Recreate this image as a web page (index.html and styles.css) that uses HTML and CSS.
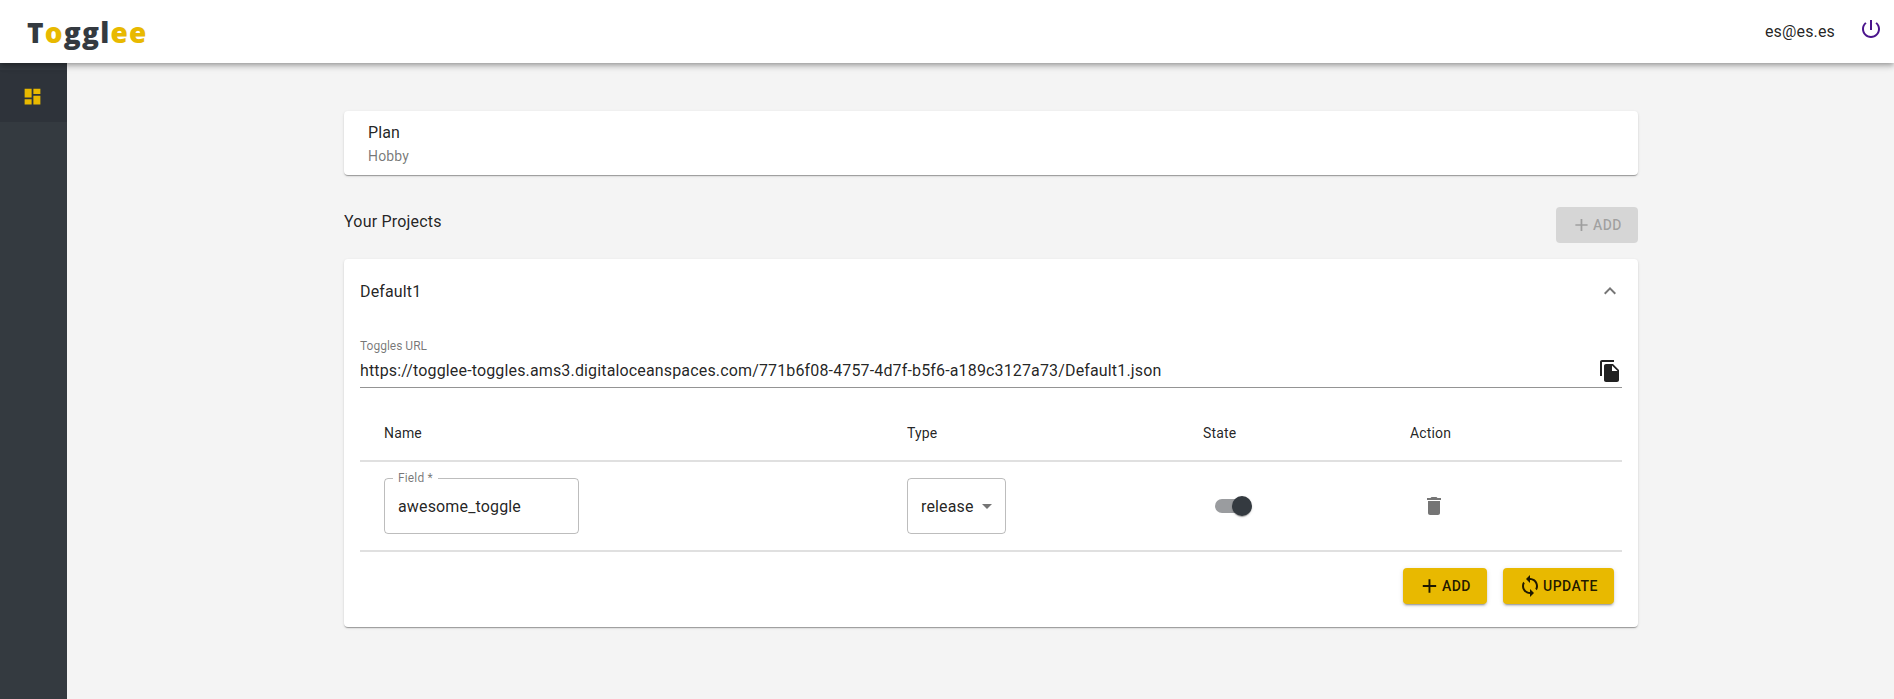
FILE: index.html
```html
<!DOCTYPE html>
<html lang="en">
<head>
<meta charset="utf-8">
<title>Togglee</title>
<link rel="stylesheet" href="styles.css">
</head>
<body>
<header class="topbar">
  <div class="logo">T<span class="gold">o</span>ggl<span class="gold">ee</span></div>
  <div class="account">
    <span class="email">es@es.es</span>
    <svg class="power" viewBox="0 0 24 24"><path d="M13 3h-2v10h2V3zm4.83 2.17l-1.42 1.42C17.99 7.86 19 9.81 19 12c0 3.87-3.13 7-7 7s-7-3.13-7-7c0-2.19 1.01-4.14 2.58-5.42L6.17 5.17C4.23 6.82 3 9.26 3 12c0 4.97 4.03 9 9 9s9-4.03 9-9c0-2.74-1.23-5.18-3.17-6.83z"/></svg>
  </div>
</header>
<div class="shell">
  <nav class="sidebar">
    <div class="nav-item">
      <svg class="nav-icon" viewBox="0 0 24 24"><path d="M3 13h8V3H3v10zm0 8h8v-6H3v6zm10 0h8V11h-8v10zm0-18v6h8V3h-8z"/></svg>
    </div>
  </nav>
  <main class="content">
    <section class="plan card">
      <div class="plan-title">Plan</div>
      <div class="plan-value">Hobby</div>
    </section>
    <div class="projects-head">
      <h2 class="projects-title">Your Projects</h2>
      <button class="btn btn-disabled" disabled>
        <svg class="btn-icon" viewBox="0 0 24 24"><path d="M19 13h-6v6h-2v-6H5v-2h6V5h2v6h6v2z"/></svg>ADD
      </button>
    </div>
    <section class="project card">
      <div class="project-head">
        <span class="project-name">Default1</span>
        <svg class="chevron" viewBox="0 0 24 24"><path d="M12 8l-6 6 1.41 1.41L12 10.83l4.59 4.58L18 14z"/></svg>
      </div>
      <div class="url-field">
        <label class="url-label">Toggles URL</label>
        <div class="url-row">
          <span class="url-value">https://togglee-toggles.ams3.digitaloceanspaces.com/771b6f08-4757-4d7f-b5f6-a189c3127a73/Default1.json</span>
          <svg class="copy" viewBox="0 0 24 24"><path d="M16 1H4c-1.1 0-2 .9-2 2v14h2V3h12V1zm-1 4l6 6v10c0 1.1-.9 2-2 2H7.99C6.89 23 6 22.1 6 21l.01-14c0-1.1.89-2 1.99-2h7zm-1 7h5.5L14 6.5V12z"/></svg>
        </div>
      </div>
      <div class="table">
        <div class="row row-head">
          <div class="cell-name">Name</div>
          <div>Type</div>
          <div>State</div>
          <div>Action</div>
        </div>
        <div class="row row-body">
          <div class="cell-name">
            <div class="outlined field">
              <span class="legend">Field *</span>
              awesome_toggle
            </div>
          </div>
          <div>
            <div class="outlined select">release<span class="caret"></span></div>
          </div>
          <div>
            <div class="switch"><span class="thumb"></span></div>
          </div>
          <div>
            <svg class="trash" viewBox="0 0 24 24"><path d="M6 19c0 1.1.9 2 2 2h8c1.1 0 2-.9 2-2V7H6v12zM19 4h-3.5l-1-1h-5l-1 1H5v2h14V4z"/></svg>
          </div>
        </div>
      </div>
      <div class="actions">
        <button class="btn btn-primary">
          <svg class="btn-icon" viewBox="0 0 24 24"><path d="M19 13h-6v6h-2v-6H5v-2h6V5h2v6h6v2z"/></svg>ADD
        </button>
        <button class="btn btn-primary">
          <svg class="btn-icon" viewBox="0 0 24 24"><path d="M12 4V1L8 5l4 4V6c3.31 0 6 2.69 6 6 0 1.01-.25 1.97-.7 2.8l1.46 1.46C19.54 15.03 20 13.57 20 12c0-4.42-3.58-8-8-8zm0 14c-3.31 0-6-2.69-6-6 0-1.01.25-1.97.7-2.8L5.24 7.74C4.46 8.97 4 10.43 4 12c0 4.42 3.58 8 8 8v3l4-4-4-4v3z"/></svg>UPDATE
        </button>
      </div>
    </section>
  </main>
</div>
</body>
</html>
```
FILE: styles.css
```css
* { box-sizing: border-box; }
html, body { height: 100%; }
body {
  margin: 0;
  height: 699px;
  overflow: hidden;
  display: flex;
  flex-direction: column;
  background: #f4f4f4;
  color: rgba(0, 0, 0, 0.87);
  font-family: Roboto, "Liberation Sans", sans-serif;
  font-size: 16px;
}
.topbar {
  position: relative;
  z-index: 2;
  height: 63px;
  flex: none;
  display: flex;
  align-items: center;
  justify-content: space-between;
  padding: 0 11px 0 27px;
  background: #fff;
  box-shadow: 0 2px 4px -1px rgba(0,0,0,.2), 0 4px 5px 0 rgba(0,0,0,.14), 0 1px 10px 0 rgba(0,0,0,.12);
}
.logo {
  font-family: "Open Sans", sans-serif;
  font-weight: 800;
  font-size: 28px;
  letter-spacing: 1.2px;
  color: #343a40;
  line-height: 1;
}
.gold { color: #e8b900; }
.account { display: flex; align-items: center; gap: 24px; }
.email { font-size: 16px; letter-spacing: 0.15px; }
.power { width: 24px; height: 24px; fill: #4a148c; margin-top: -5px; }
.shell { flex: 1; display: flex; min-height: 0; }
.sidebar { width: 67px; flex: none; background: #343a40; padding-top: 7px; }
.nav-item {
  height: 52px;
  display: flex;
  align-items: center;
  justify-content: center;
  background: #2e333a;
}
.nav-icon { width: 21px; height: 21px; fill: #e8b900; margin-left: -3px; }
.content { flex: 1; padding: 48px 256px 0 277px; }
.card {
  background: #fff;
  border-radius: 4px;
  box-shadow: 0 2px 1px -1px rgba(0,0,0,.2), 0 1px 1px 0 rgba(0,0,0,.14), 0 1px 3px 0 rgba(0,0,0,.12);
}
.plan { height: 64px; padding: 11px 24px 0; }
.plan-title { font-size: 16px; line-height: 22px; letter-spacing: 0.1px; }
.plan-value { font-size: 14px; line-height: 20px; margin-top: 2px; letter-spacing: 0.15px; color: rgba(0,0,0,.54); }
.projects-head {
  height: 84px;
  display: flex;
  align-items: center;
  justify-content: space-between;
  padding-top: 16px;
}
.projects-title { margin: -8px 0 0; font-size: 16px; font-weight: 400; letter-spacing: 0.2px; }
.btn {
  height: 36px;
  display: inline-flex;
  align-items: center;
  justify-content: center;
  border: 0;
  border-radius: 4px;
  font-family: inherit;
  font-size: 14px;
  font-weight: 500;
  letter-spacing: 0.5px;
  padding: 0 16px;
}
.btn-icon { width: 24px; height: 24px; fill: currentColor; margin-left: -1px; margin-right: 1px; }
.btn-disabled { width: 82px; background: rgba(0,0,0,.12); color: rgba(0,0,0,.26); }
.btn-primary {
  background: #e8b900;
  color: rgba(0,0,0,.87);
  box-shadow: 0 3px 1px -2px rgba(0,0,0,.2), 0 2px 2px 0 rgba(0,0,0,.14), 0 1px 5px 0 rgba(0,0,0,.12);
}
.project { height: 368px; padding: 0 16px; }
.project-head { height: 64px; display: flex; align-items: center; justify-content: space-between; }
.project-name { font-size: 16px; letter-spacing: 0.15px; }
.chevron { width: 24px; height: 24px; fill: rgba(0,0,0,.54); margin-right: 0; }
.url-field { margin-top: 15px; height: 50px; border-bottom: 1px solid rgba(0,0,0,.42); }
.url-label { display: block; font-size: 12px; line-height: 16px; color: rgba(0,0,0,.54); }
.url-row { display: flex; align-items: center; justify-content: space-between; height: 33px; }
.url-value { font-size: 16px; letter-spacing: 0.15px; }
.copy { width: 24px; height: 24px; fill: rgba(0,0,0,.87); margin-right: 0; }
.row { display: grid; grid-template-columns: 547px 296px 207px 1fr; align-items: center; border-bottom: 2px solid #e0e0e0; }
.row-head { height: 74px; font-size: 14px; letter-spacing: 0.15px; padding-top: 17px; }
.row-body { height: 90px; }
.cell-name { padding-left: 24px; }
.outlined {
  position: relative;
  height: 56px;
  border: 1px solid rgba(0,0,0,.26);
  border-radius: 4px;
  display: flex;
  align-items: center;
  font-size: 16px;
  letter-spacing: 0.15px;
  padding: 0 13px;
}
.field { width: 195px; }
.legend {
  position: absolute;
  top: -7px;
  left: 8px;
  padding: 0 5px;
  background: #fff;
  font-size: 12px;
  line-height: 12px;
  color: rgba(0,0,0,.54);
}
.select { width: 99px; padding-left: 13px; }
.caret {
  margin-left: 8px;
  border-left: 5px solid transparent;
  border-right: 5px solid transparent;
  border-top: 5px solid rgba(0,0,0,.54);
}
.switch {
  position: relative;
  width: 34px;
  height: 14px;
  margin-left: 12px;
  border-radius: 7px;
  background: #9a9c9f;
}
.thumb {
  position: absolute;
  top: -3px;
  left: 17px;
  width: 20px;
  height: 20px;
  border-radius: 50%;
  background: #343a40;
  box-shadow: 0 2px 1px -1px rgba(0,0,0,.2), 0 1px 1px 0 rgba(0,0,0,.14), 0 1px 3px 0 rgba(0,0,0,.12);
}
.trash { width: 24px; height: 24px; fill: rgba(0,0,0,.54); margin-left: 12px; display: block; }
.actions { display: flex; justify-content: flex-end; gap: 16px; padding: 16px 8px 0 0; }
.actions .btn:first-child { width: 84px; }
.actions .btn:last-child { width: 111px; }
```
